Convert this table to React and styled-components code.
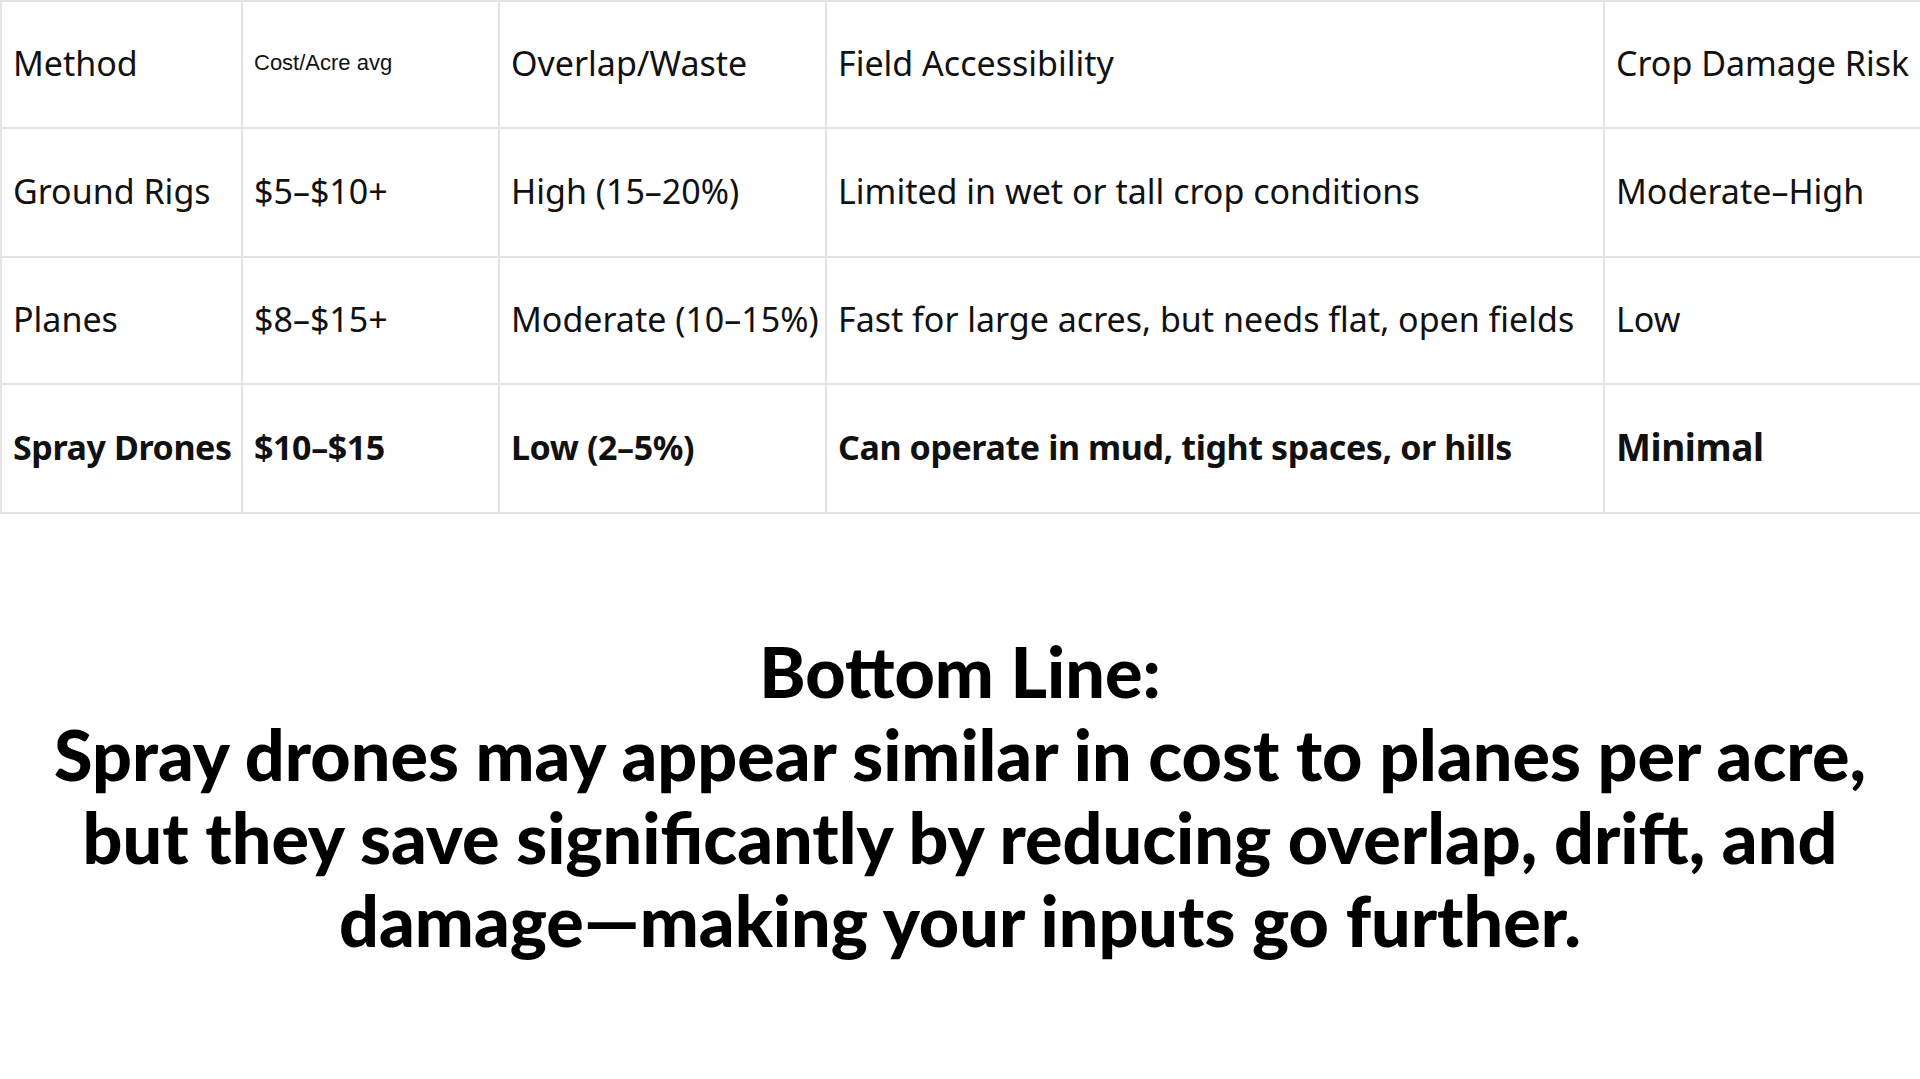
import React from 'react';
import styled, { createGlobalStyle } from 'styled-components';

const GlobalStyle = createGlobalStyle`
  html, body {
    margin: 0;
    padding: 0;
    background: #ffffff;
    overflow: hidden;
  }
  body {
    width: 1920px;
    height: 1079px;
  }
`;

const Page = styled.div`
  width: 1920px;
  height: 1079px;
  overflow: hidden;
  background: #ffffff;
  display: flex;
  flex-direction: column;
`;

const Table = styled.table`
  border-collapse: collapse;
  table-layout: fixed;
  width: 2000px;
  font-family: 'Noto Sans', 'Open Sans', sans-serif;
  color: #111111;
`;

const Row = styled.tr`
  height: ${props => props.height}px;
`;

const Cell = styled.td`
  border: 2px solid #e4e4e4;
  padding: 0 0 4px 11px;
  vertical-align: middle;
  white-space: nowrap;
  font-size: ${props => props.size || 34}px;
  font-weight: ${props => (props.bold ? 700 : 400)};
  font-family: ${props => (props.arial ? "'Liberation Sans', Arial, sans-serif" : 'inherit')};
  letter-spacing: ${props => (props.bold ? '-0.4px' : '0')};
`;

const Summary = styled.div`
  margin-top: 116px;
  text-align: center;
  font-family: Lato, 'Noto Sans', sans-serif;
  font-weight: 900;
  font-size: 70px;
  line-height: 83px;
  color: #000000;
`;

const Line = styled.div`
  white-space: nowrap;
`;

const columns = [241, 257, 327, 778, 397];

const rows = [
  { height: 127, cells: ['Method', { text: 'Cost/Acre avg', arial: true, size: 22 }, 'Overlap/Waste', 'Field Accessibility', 'Crop Damage Risk'] },
  { height: 129, cells: ['Ground Rigs', '$5–$10+', 'High (15–20%)', 'Limited in wet or tall crop conditions', 'Moderate–High'] },
  { height: 127, cells: ['Planes', '$8–$15+', 'Moderate (10–15%)', 'Fast for large acres, but needs flat, open fields', 'Low'] },
  { height: 129, bold: true, cells: ['Spray Drones', '$10–$15', 'Low (2–5%)', 'Can operate in mud, tight spaces, or hills', { text: 'Minimal', size: 37 }] },
];

const App = () => (
  <Page>
    <GlobalStyle />
    <Table>
      <colgroup>
        {columns.map((w, i) => <col key={i} style={{ width: w }} />)}
      </colgroup>
      <tbody>
        {rows.map((row, r) => (
          <Row key={r} height={row.height}>
            {row.cells.map((cell, c) => {
              const item = typeof cell === 'string' ? { text: cell } : cell;
              return (
                <Cell key={c} bold={row.bold} arial={item.arial} size={item.size}>
                  {item.text}
                </Cell>
              );
            })}
          </Row>
        ))}
      </tbody>
    </Table>
    <Summary>
      <Line>Bottom Line:</Line>
      <Line>Spray drones may appear similar in cost to planes per acre,</Line>
      <Line>but they save significantly by reducing overlap, drift, and</Line>
      <Line>damage—making your inputs go further.</Line>
    </Summary>
  </Page>
);

export default App;
